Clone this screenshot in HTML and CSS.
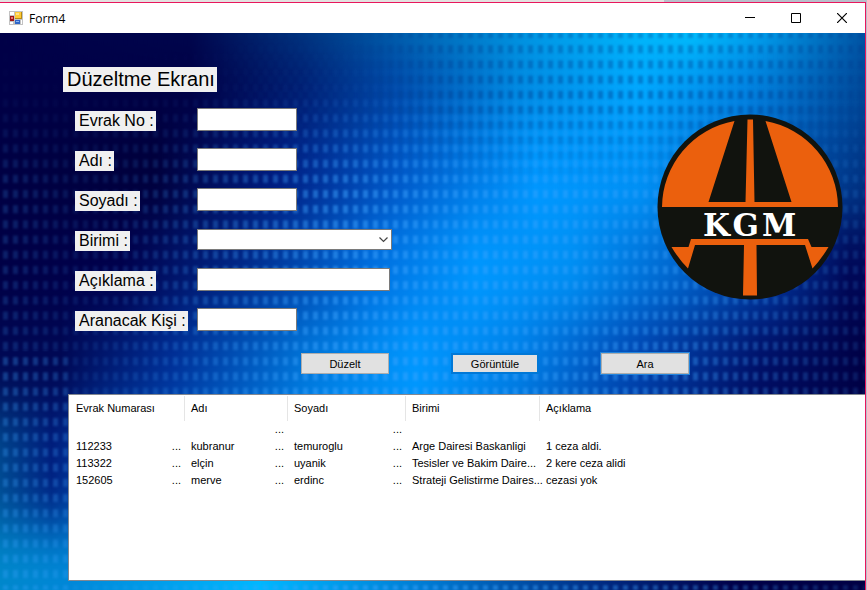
FILE: index.html
```html
<!DOCTYPE html>
<html lang="tr">
<head>
<meta charset="utf-8">
<title>Form4</title>
<link rel="stylesheet" href="styles.css">
</head>
<body>
<div class="window">
  <header class="titlebar">
    <svg class="app-icon" width="14" height="14" viewBox="0 0 14 14" aria-hidden="true">
      <rect width="14" height="14" fill="#c2c2c2"/>
      <path d="M1 1h4v3H1zM1 11h3v2H1zM12 9h1v4h-1z" fill="#fff"/>
      <rect x="6" y="1" width="7" height="7" fill="#b78a12"/>
      <rect x="6" y="1" width="6" height="6" fill="#ffca35"/>
      <rect x="7" y="2" width="3" height="2" fill="#ffe48a"/>
      <rect x="1" y="5" width="4" height="5" fill="#a01414"/>
      <rect x="2" y="6" width="2" height="2" fill="#e87070"/>
      <rect x="6" y="9" width="5" height="4" fill="#2f66c8"/>
      <rect x="7" y="10" width="3" height="1" fill="#8cb4f4"/>
    </svg>
    <h1 class="caption">Form4</h1>
    <div class="window-buttons">
      <button type="button" aria-label="Simge durumuna küçült"><svg width="10" height="10"><path d="M0 4.500h10" stroke="#000"/></svg></button>
      <button type="button" aria-label="Ekranı kapla"><svg width="10" height="10"><path d="M.5.5h9v9h-9z" fill="none" stroke="#000"/></svg></button>
      <button type="button" aria-label="Kapat"><svg width="10" height="10"><path d="M0 0l10 10M10 0L0 10" stroke="#000" stroke-width="1.200"/></svg></button>
    </div>
  </header>
  <main class="client">
    <svg class="backdrop" viewBox="0 33 865 557" preserveAspectRatio="none" aria-hidden="true">
      <defs>
        <linearGradient id="r0"><stop offset="0" stop-color="#000048"/><stop offset=".22" stop-color="#000850"/><stop offset=".32" stop-color="#003078"/><stop offset=".5" stop-color="#0074bc"/><stop offset=".63" stop-color="#00a0e8"/><stop offset=".8" stop-color="#00c8ff"/><stop offset=".88" stop-color="#00a8f0"/><stop offset="1" stop-color="#0058a8"/></linearGradient>
        <linearGradient id="r1"><stop offset="0" stop-color="#000046"/><stop offset=".22" stop-color="#000044"/><stop offset=".35" stop-color="#001c70"/><stop offset=".46" stop-color="#0048a8"/><stop offset=".6" stop-color="#0088e0"/><stop offset=".74" stop-color="#00a8ff"/><stop offset=".86" stop-color="#0084e4"/><stop offset="1" stop-color="#004898"/></linearGradient>
        <linearGradient id="r2"><stop offset="0" stop-color="#000044"/><stop offset=".18" stop-color="#00003c"/><stop offset=".32" stop-color="#001c80"/><stop offset=".46" stop-color="#0058c8"/><stop offset=".62" stop-color="#0098ff"/><stop offset=".74" stop-color="#0094f8"/><stop offset=".88" stop-color="#0060c0"/><stop offset="1" stop-color="#003484"/></linearGradient>
        <linearGradient id="r3"><stop offset="0" stop-color="#000046"/><stop offset=".14" stop-color="#00004c"/><stop offset=".28" stop-color="#002888"/><stop offset=".43" stop-color="#0070e0"/><stop offset=".55" stop-color="#0098ff"/><stop offset=".66" stop-color="#0090f4"/><stop offset=".78" stop-color="#0068d0"/><stop offset=".89" stop-color="#0038a0"/><stop offset=".98" stop-color="#000858"/><stop offset="1" stop-color="#000858"/></linearGradient>
        <linearGradient id="r4"><stop offset="0" stop-color="#000854"/><stop offset=".07" stop-color="#000854"/><stop offset=".2" stop-color="#003098"/><stop offset=".35" stop-color="#0074d8"/><stop offset=".48" stop-color="#0098ff"/><stop offset=".6" stop-color="#0080e8"/><stop offset=".74" stop-color="#0044b0"/><stop offset=".88" stop-color="#001068"/><stop offset="1" stop-color="#000044"/></linearGradient>
        <linearGradient id="r5"><stop offset="0" stop-color="#004890"/><stop offset=".06" stop-color="#002080"/><stop offset=".12" stop-color="#0048b0"/><stop offset=".4" stop-color="#0098ff"/><stop offset=".5" stop-color="#0090f4"/><stop offset=".72" stop-color="#003090"/><stop offset=".85" stop-color="#000450"/><stop offset="1" stop-color="#000044"/></linearGradient>
        <linearGradient id="r6"><stop offset="0" stop-color="#0088cc"/><stop offset=".08" stop-color="#0088d8"/><stop offset=".3" stop-color="#00b8ff"/><stop offset=".5" stop-color="#0078d0"/><stop offset=".7" stop-color="#002880"/><stop offset=".85" stop-color="#000048"/><stop offset="1" stop-color="#000044"/></linearGradient>
        <filter id="melt" color-interpolation-filters="sRGB" filterUnits="userSpaceOnUse" x="-20" y="-100" width="905" height="830"><feGaussianBlur stdDeviation="0 28"/></filter>
        <filter id="soft" filterUnits="userSpaceOnUse" x="0" y="33" width="865" height="557"><feGaussianBlur stdDeviation="1"/></filter>
        <pattern id="dots" width="10" height="15.200" y="338" patternUnits="userSpaceOnUse"><rect x="3" y="4" width="5" height="8" fill="#3ca4ff"/></pattern>
        <pattern id="bars" width="10" height="15.200" y="330" patternUnits="userSpaceOnUse"><rect x="8" y="4" width="5" height="8" fill="#003c90"/><rect x="-2" y="4" width="5" height="8" fill="#003c90"/></pattern>
        <linearGradient id="fadeX"><stop offset="0" stop-color="#fff" stop-opacity=".2"/><stop offset=".1" stop-color="#fff" stop-opacity=".1"/><stop offset=".22" stop-color="#fff" stop-opacity=".24"/><stop offset=".4" stop-color="#fff" stop-opacity=".5"/><stop offset=".8" stop-color="#fff" stop-opacity=".36"/><stop offset="1" stop-color="#fff" stop-opacity=".14"/></linearGradient>
        <linearGradient id="fadeY" x2="0" y2="1"><stop offset="0" stop-color="#000"/><stop offset=".1" stop-color="#000" stop-opacity=".9"/><stop offset=".28" stop-color="#000" stop-opacity="0"/></linearGradient>
        <linearGradient id="topY" x2="0" y2="1"><stop offset="0" stop-color="#fff" stop-opacity=".3"/><stop offset=".12" stop-color="#fff" stop-opacity=".42"/><stop offset=".28" stop-color="#fff" stop-opacity="0"/></linearGradient>
        <linearGradient id="leftX"><stop offset=".25" stop-color="#000"/><stop offset=".5" stop-color="#000" stop-opacity="0"/></linearGradient>
        <mask id="lightMask" maskUnits="userSpaceOnUse" x="0" y="33" width="865" height="557"><rect y="33" width="865" height="557" fill="url(#fadeX)"/><rect y="33" width="865" height="557" fill="url(#fadeY)"/><rect y="350" width="70" height="240" fill="#fff" fill-opacity=".15"/></mask>
        <mask id="darkMask" maskUnits="userSpaceOnUse" x="0" y="33" width="865" height="557"><rect y="33" width="865" height="557" fill="url(#topY)"/><rect y="33" width="865" height="557" fill="url(#leftX)"/></mask>
      </defs>
      <g filter="url(#melt)">
        <rect y="-100" width="865" height="150" fill="url(#r0)"/>
        <rect y="50" width="865" height="75" fill="url(#r1)"/>
        <rect y="125" width="865" height="95" fill="url(#r2)"/>
        <rect y="220" width="865" height="95" fill="url(#r3)"/>
        <rect y="315" width="865" height="95" fill="url(#r4)"/>
        <rect y="410" width="865" height="115" fill="url(#r5)"/>
        <rect y="525" width="865" height="205" fill="url(#r6)"/>
      </g>
      <g mask="url(#lightMask)"><rect y="33" width="865" height="557" fill="url(#dots)" filter="url(#soft)"/></g>
      <g mask="url(#darkMask)"><rect y="33" width="865" height="557" fill="url(#bars)" filter="url(#soft)"/></g>
    </svg>

    <form class="editor">
      <div class="top">
        <div>
          <h2 class="tag heading">Düzeltme Ekranı</h2>
          <div class="fields">
            <label class="tag" for="evrak">Evrak No :</label><input class="field" id="evrak" type="text">
            <label class="tag" for="adi">Adı :</label><input class="field" id="adi" type="text">
            <label class="tag" for="soyadi">Soyadı :</label><input class="field" id="soyadi" type="text">
            <label class="tag" for="birimi">Birimi :</label>
            <span class="combo">
              <select class="field" id="birimi"><option></option></select>
              <svg class="chevron" width="9" height="6" viewBox="0 0 9 6" aria-hidden="true"><path d="M.5.5l4 4 4-4" fill="none" stroke="#444" stroke-width="1.200"/></svg>
            </span>
            <label class="tag" for="aciklama">Açıklama :</label><input class="field wide" id="aciklama" type="text">
            <label class="tag" for="aranacak">Aranacak Kişi :</label><input class="field" id="aranacak" type="text">
          </div>
        </div>
        <svg class="logo" width="188" height="188" viewBox="16 13.500 188 188" role="img" aria-label="KGM">
          <circle cx="110" cy="107.500" r="92.500" fill="#11130e"/>
          <path d="M22 107.500A88 88 0 0 1 94.500 21.500L68.500 102.500H105.500L107.500 20H113L114.500 102.500H151.500L125.500 21.500A88 88 0 0 1 198 107.500Z" fill="#eb600d"/>
          <path d="M51 139.500H168L171.500 147.500H188.500Q181 160 172.500 169L165 145.500H116.500L117 196H103L104 145.500H55L48 169Q39 160 31.500 147.500H48.500Z" fill="#eb600d"/>
          <text class="logo-text" x="63 92.500 122" y="136">KGM</text>
        </svg>
      </div>
      <div class="actions">
        <button class="push" type="button">Düzelt</button>
        <button class="push focused" type="button">Görüntüle</button>
        <button class="push hot" type="button">Ara</button>
      </div>
    </form>

    <section class="list">
      <table>
        <colgroup><col class="c1"><col class="c2"><col class="c3"><col class="c4"><col></colgroup>
        <thead>
          <tr><th>Evrak Numarası</th><th>Adı</th><th>Soyadı</th><th>Birimi</th><th>Açıklama</th></tr>
        </thead>
        <tbody>
          <tr><td></td><td><div class="cell"><span></span><span>...</span></div></td><td><div class="cell"><span></span><span>...</span></div></td><td></td><td></td></tr>
          <tr><td><div class="cell"><span>112233</span><span>...</span></div></td><td><div class="cell"><span>kubranur</span><span>...</span></div></td><td><div class="cell"><span>temuroglu</span><span>...</span></div></td><td>Arge Dairesi Baskanligi</td><td>1 ceza aldi.</td></tr>
          <tr><td><div class="cell"><span>113322</span><span>...</span></div></td><td><div class="cell"><span>elçin</span><span>...</span></div></td><td><div class="cell"><span>uyanik</span><span>...</span></div></td><td>Tesisler ve Bakim Daire...</td><td>2 kere ceza alidi</td></tr>
          <tr><td><div class="cell"><span>152605</span><span>...</span></div></td><td><div class="cell"><span>merve</span><span>...</span></div></td><td><div class="cell"><span>erdinc</span><span>...</span></div></td><td>Strateji Gelistirme Daires...</td><td>cezasi yok</td></tr>
        </tbody>
      </table>
    </section>
  </main>
</div>
</body>
</html>
```
FILE: styles.css
```css
* { box-sizing: border-box; }

body {
  margin: 0;
  min-height: 100vh;
  padding: 2px 1px 0 0;
  display: flex;
  background: linear-gradient(90deg, #e3e1e0 0 664px, #b9bfcb 664px);
  font-family: "Liberation Sans", Arial, sans-serif;
  font-size: 11px;
  color: #000;
}

.window {
  flex: 1;
  display: flex;
  flex-direction: column;
  border: solid #e8175d;
  border-width: 1px 1px 0 0;
}

.titlebar {
  display: flex;
  align-items: center;
  height: 30px;
  padding-left: 9px;
  gap: 6px;
  background: #fff;
}

.caption {
  flex: 1;
  margin: 0;
  font: 12px "Open Sans", "Noto Sans", sans-serif;
}

.window-buttons { display: flex; }

.window-buttons button {
  display: grid;
  place-items: center;
  width: 46px;
  height: 28px;
  padding: 0;
  border: 0;
  background: none;
}

.client {
  position: relative;
  flex: 1;
  display: flex;
  flex-direction: column;
  padding-bottom: 9px;
  background: #000048;
}

.backdrop {
  position: absolute;
  inset: 0;
  width: 100%;
  height: 100%;
}

.editor, .list { position: relative; }

.top {
  display: flex;
  justify-content: space-between;
  align-items: flex-start;
  padding: 34px 21px 0 63px;
}

.tag {
  justify-self: start;
  padding: 0 2px 0 4px;
  background: #f0f0f0;
  font-size: 16px;
  line-height: 20px;
  white-space: nowrap;
}

.heading {
  width: fit-content;
  margin: 0 0 16px;
  font-size: 20px;
  font-weight: normal;
  line-height: 25px;
}

.fields {
  display: grid;
  grid-template-columns: 122px auto;
  grid-auto-rows: 23px;
  row-gap: 17px;
  padding-left: 12px;
}

.fields .tag { margin-top: 3px; }

.field {
  width: 100px;
  height: 23px;
  padding: 0 4px;
  border: 1px solid #7a7a7a;
  border-radius: 0;
  background: #fff;
  font: inherit;
}

.wide { width: 193px; }

.combo {
  position: relative;
  align-self: center;
  width: 195px;
  height: 21px;
}

.combo .field {
  display: block;
  width: 100%;
  height: 100%;
  appearance: none;
}

.chevron {
  position: absolute;
  right: 4px;
  top: 8px;
  pointer-events: none;
}

.logo { margin-top: 46px; }

.logo-text {
  font: bold 31px "DejaVu Serif", serif;
  fill: #fff;
}

.actions {
  display: flex;
  gap: 62px;
  padding: 22px 0 20px 301px;
}

.push {
  width: 88px;
  height: 21px;
  padding: 0;
  border: 1px solid #adadad;
  background: #e1e1e1;
  color: #000;
  font: inherit;
}

.focused { border: 2px solid #0078d7; }
.hot { outline: 1px solid #2384dc; }

.list {
  flex: 1;
  margin-left: 68px;
  padding-top: 1px;
  border: solid #828790;
  border-width: 1px 0 1px 1px;
  background: #fff;
}

table {
  width: 100%;
  table-layout: fixed;
  border-collapse: collapse;
}

.c1 { width: 116px; }
.c2 { width: 103px; }
.c3 { width: 118px; }
.c4 { width: 134px; }

th, td {
  padding: 0 4px 0 6px;
  text-align: left;
  font-weight: normal;
  white-space: nowrap;
}

th:first-child, td:first-child { padding-left: 7px; }

th {
  height: 25px;
  padding-bottom: 2px;
  background: linear-gradient(#e5e5e5, #e5e5e5) right / 1px 100% no-repeat;
}

th:last-child { background: none; }

td {
  height: 17px;
  line-height: 17px;
}

.cell {
  display: flex;
  justify-content: space-between;
}
```
